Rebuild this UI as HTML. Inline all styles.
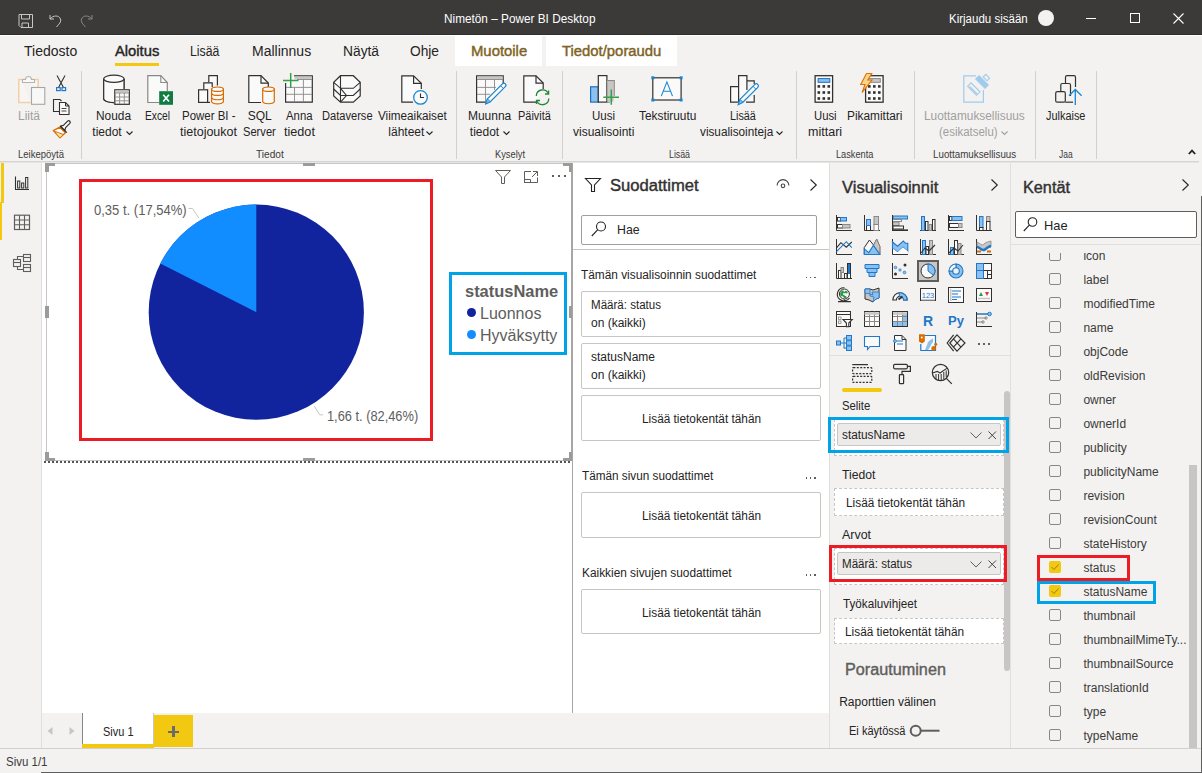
<!DOCTYPE html><html><head><meta charset="utf-8"><style>
html,body{margin:0;padding:0;}
body{width:1202px;height:773px;overflow:hidden;position:relative;background:#f3f2f1;font-family:"Liberation Sans",sans-serif;}
.t{position:absolute;white-space:nowrap;line-height:1;}
svg{overflow:visible}
</style></head><body>
<div style="position:absolute;left:0px;top:0px;width:1202px;height:35px;background:#3b3a39"></div>
<div style="position:absolute;left:0px;top:34px;width:1202px;height:1px;background:#2f2e2d"></div>
<div style="position:absolute;left:0px;top:35px;width:1202px;height:1px;background:#ffffff"></div>
<div class="t" style="left:444.3px;top:13px;font-size:12px;color:#ffffff;transform:scaleX(0.983);transform-origin:0 0;">Nimetön – Power BI Desktop</div>
<div class="t" style="left:949.0px;top:13px;font-size:12px;color:#ffffff;transform:scaleX(0.959);transform-origin:0 0;">Kirjaudu sisään</div>
<div style="position:absolute;left:1038px;top:10px;width:16px;height:16px;background:#f3f2f1;border-radius:50%"></div>
<div style="position:absolute;left:1086px;top:18px;width:10px;height:1px;background:#ffffff"></div>
<div style="position:absolute;left:1130px;top:13px;width:10px;height:10px;border:1px solid #ffffff;box-sizing:border-box"></div>
<svg style="position:absolute;left:1173px;top:13px;" width="11" height="11" viewBox="0 0 11 11"><path d="M0.5 0.5L10.5 10.5M10.5 0.5L0.5 10.5" stroke="#fff" stroke-width="1.1"/></svg>
<svg style="position:absolute;left:18px;top:13px;" width="16" height="16" viewBox="0 0 16 16"><path d="M1 1.5H14.5V14.5H3L1 12.5Z" fill="none" stroke="#c8c6c4" stroke-width="1"/><path d="M3.5 1.5V6H11.5V1.5" fill="none" stroke="#c8c6c4"/><path d="M4 14.5V10H10.5V14.5" fill="none" stroke="#c8c6c4"/></svg>
<svg style="position:absolute;left:48px;top:13px;" width="16" height="16" viewBox="0 0 16 16"><path d="M2 2V6H6" fill="none" stroke="#c8c6c4"/><path d="M2 6C5 2 11 2 12.5 6C13.5 9 11 11 8.5 14" fill="none" stroke="#c8c6c4"/></svg>
<svg style="position:absolute;left:78px;top:13px;" width="16" height="16" viewBox="0 0 16 16"><path d="M14 2V6H10" fill="none" stroke="#8a8886"/><path d="M14 6C11 2 5 2 3.5 6C2.5 9 5 11 7.5 14" fill="none" stroke="#8a8886"/></svg>
<div style="position:absolute;left:455px;top:35px;width:87px;height:31px;background:#ffffff"></div>
<div style="position:absolute;left:546px;top:35px;width:131px;height:31px;background:#ffffff"></div>
<div class="t" style="left:24.0px;top:44px;font-size:14px;color:#252423;">Tiedosto</div>
<div class="t" style="left:115.0px;top:44px;font-size:14px;color:#252423;transform:scaleX(1.054);transform-origin:0 0;-webkit-text-stroke:0.4px #252423;">Aloitus</div>
<div style="position:absolute;left:115px;top:63px;width:44px;height:3px;background:#f2c811"></div>
<div class="t" style="left:190.4px;top:44px;font-size:14px;color:#252423;transform:scaleX(0.879);transform-origin:0 0;">Lisää</div>
<div class="t" style="left:252.0px;top:44px;font-size:14px;color:#252423;">Mallinnus</div>
<div class="t" style="left:343.0px;top:44px;font-size:14px;color:#252423;transform:scaleX(0.985);transform-origin:0 0;">Näytä</div>
<div class="t" style="left:410.0px;top:44px;font-size:14px;color:#252423;transform:scaleX(0.981);transform-origin:0 0;">Ohje</div>
<div class="t" style="left:470.7px;top:44px;font-size:14px;color:#7d6224;transform:scaleX(1.061);transform-origin:0 0;-webkit-text-stroke:0.4px #7d6224;">Muotoile</div>
<div class="t" style="left:561.7px;top:44px;font-size:14px;color:#7d6224;transform:scaleX(1.061);transform-origin:0 0;-webkit-text-stroke:0.4px #7d6224;">Tiedot/poraudu</div>
<div style="position:absolute;left:0px;top:161px;width:1199px;height:1px;background:#d6d4d2"></div>
<div style="position:absolute;left:0px;top:162px;width:1199px;height:1px;background:#e6e5e4;z-index:3"></div>
<div style="position:absolute;left:81px;top:71px;width:1px;height:88px;background:#d2d0ce"></div>
<div style="position:absolute;left:456px;top:71px;width:1px;height:88px;background:#d2d0ce"></div>
<div style="position:absolute;left:562px;top:71px;width:1px;height:88px;background:#d2d0ce"></div>
<div style="position:absolute;left:796px;top:71px;width:1px;height:88px;background:#d2d0ce"></div>
<div style="position:absolute;left:914px;top:71px;width:1px;height:88px;background:#d2d0ce"></div>
<div style="position:absolute;left:1035px;top:71px;width:1px;height:88px;background:#d2d0ce"></div>
<div style="position:absolute;left:1096px;top:71px;width:1px;height:88px;background:#d2d0ce"></div>
<div class="t" style="left:18.0px;top:110px;font-size:12px;color:#a19f9d;">Liitä</div>
<div class="t" style="left:96.0px;top:110px;font-size:12px;color:#252423;transform:scaleX(0.990);transform-origin:0 0;">Nouda</div>
<div class="t" style="left:92.3px;top:126px;font-size:12px;color:#252423;">tiedot</div>
<div class="t" style="left:145.0px;top:110px;font-size:12px;color:#252423;transform:scaleX(0.852);transform-origin:0 0;">Excel</div>
<div class="t" style="left:181.6px;top:110px;font-size:12px;color:#252423;transform:scaleX(0.954);transform-origin:0 0;">Power BI -</div>
<div class="t" style="left:180.0px;top:126px;font-size:12px;color:#252423;transform:scaleX(1.042);transform-origin:0 0;">tietojoukot</div>
<div class="t" style="left:247.7px;top:110px;font-size:12px;color:#252423;">SQL</div>
<div class="t" style="left:242.9px;top:126px;font-size:12px;color:#252423;transform:scaleX(0.928);transform-origin:0 0;">Server</div>
<div class="t" style="left:285.8px;top:110px;font-size:12px;color:#252423;transform:scaleX(0.946);transform-origin:0 0;">Anna</div>
<div class="t" style="left:283.9px;top:126px;font-size:12px;color:#252423;transform:scaleX(1.053);transform-origin:0 0;">tiedot</div>
<div class="t" style="left:322.0px;top:110px;font-size:12px;color:#252423;transform:scaleX(0.925);transform-origin:0 0;">Dataverse</div>
<div class="t" style="left:378.0px;top:110px;font-size:12px;color:#252423;transform:scaleX(0.975);transform-origin:0 0;">Viimeaikaiset</div>
<div class="t" style="left:388.3px;top:126px;font-size:12px;color:#252423;">lähteet</div>
<div class="t" style="left:467.9px;top:110px;font-size:12px;color:#252423;">Muunna</div>
<div class="t" style="left:469.8px;top:126px;font-size:12px;color:#252423;">tiedot</div>
<div class="t" style="left:517.5px;top:110px;font-size:12px;color:#252423;transform:scaleX(0.913);transform-origin:0 0;">Päivitä</div>
<div class="t" style="left:592.0px;top:110px;font-size:12px;color:#252423;transform:scaleX(0.958);transform-origin:0 0;">Uusi</div>
<div class="t" style="left:573.0px;top:126px;font-size:12px;color:#252423;">visualisointi</div>
<div class="t" style="left:638.8px;top:110px;font-size:12px;color:#252423;transform:scaleX(0.988);transform-origin:0 0;">Tekstiruutu</div>
<div class="t" style="left:730.1px;top:110px;font-size:12px;color:#252423;transform:scaleX(0.899);transform-origin:0 0;">Lisää</div>
<div class="t" style="left:699.8px;top:126px;font-size:12px;color:#252423;transform:scaleX(0.980);transform-origin:0 0;">visualisointeja</div>
<div class="t" style="left:813.6px;top:110px;font-size:12px;color:#252423;transform:scaleX(0.941);transform-origin:0 0;">Uusi</div>
<div class="t" style="left:807.5px;top:126px;font-size:12px;color:#252423;transform:scaleX(1.044);transform-origin:0 0;">mittari</div>
<div class="t" style="left:847.3px;top:110px;font-size:12px;color:#252423;transform:scaleX(0.989);transform-origin:0 0;">Pikamittari</div>
<div class="t" style="left:924.0px;top:110px;font-size:12px;color:#a19f9d;transform:scaleX(0.987);transform-origin:0 0;">Luottamuksellisuus</div>
<div class="t" style="left:939.0px;top:126px;font-size:12px;color:#a19f9d;transform:scaleX(0.955);transform-origin:0 0;">(esikatselu)</div>
<div class="t" style="left:1045.9px;top:110px;font-size:12px;color:#252423;transform:scaleX(0.909);transform-origin:0 0;">Julkaise</div>
<div class="t" style="left:18.0px;top:150px;font-size:10px;color:#3b3a39;transform:scaleX(0.951);transform-origin:0 0;">Leikepöytä</div>
<div class="t" style="left:255.6px;top:150px;font-size:10px;color:#3b3a39;transform:scaleX(1.014);transform-origin:0 0;">Tiedot</div>
<div class="t" style="left:495.0px;top:150px;font-size:10px;color:#3b3a39;transform:scaleX(0.931);transform-origin:0 0;">Kyselyt</div>
<div class="t" style="left:669.0px;top:150px;font-size:10px;color:#3b3a39;transform:scaleX(0.878);transform-origin:0 0;">Lisää</div>
<div class="t" style="left:836.3px;top:150px;font-size:10px;color:#3b3a39;transform:scaleX(0.921);transform-origin:0 0;">Laskenta</div>
<div class="t" style="left:933.0px;top:150px;font-size:10px;color:#3b3a39;transform:scaleX(0.978);transform-origin:0 0;">Luottamuksellisuus</div>
<div class="t" style="left:1058.8px;top:150px;font-size:10px;color:#3b3a39;transform:scaleX(0.843);transform-origin:0 0;">Jaa</div>
<svg style="position:absolute;left:125.5px;top:130.5px;" width="7" height="4" viewBox="0 0 7 4"><path d="M0.5 0.5L3.5 3.5L6.5 0.5" fill="none" stroke="#252423" stroke-width="1.1"/></svg>
<svg style="position:absolute;left:426.3px;top:130.5px;" width="7" height="4" viewBox="0 0 7 4"><path d="M0.5 0.5L3.5 3.5L6.5 0.5" fill="none" stroke="#252423" stroke-width="1.1"/></svg>
<svg style="position:absolute;left:503px;top:130.5px;" width="7" height="4" viewBox="0 0 7 4"><path d="M0.5 0.5L3.5 3.5L6.5 0.5" fill="none" stroke="#252423" stroke-width="1.1"/></svg>
<svg style="position:absolute;left:776px;top:130.5px;" width="7" height="4" viewBox="0 0 7 4"><path d="M0.5 0.5L3.5 3.5L6.5 0.5" fill="none" stroke="#252423" stroke-width="1.1"/></svg>
<svg style="position:absolute;left:1000.5px;top:130.5px;" width="7" height="4" viewBox="0 0 7 4"><path d="M0.5 0.5L3.5 3.5L6.5 0.5" fill="none" stroke="#a19f9d" stroke-width="1.1"/></svg>
<svg style="position:absolute;left:1188px;top:148.5px;" width="8" height="6" viewBox="0 0 8 6"><path d="M0.8 5L4 1.6L7.2 5" fill="none" stroke="#252423" stroke-width="1.8"/></svg>
<svg style="position:absolute;left:0px;top:0px;" width="1202" height="162" viewBox="0 0 1202 162"><path d="M21.5 79.5H38.2V88M30.5 102.6H18.8V79.5H21.5" fill="#f8f6f4" stroke="#f3cfa3" stroke-width="1.5"/><path d="M22.5 82.5V79.5H25.5A3 3 0 0 1 31.5 79.5H34.5V82.5Z" fill="#f8f8f8" stroke="#b5b3b1" stroke-width="1.1"/><rect x="31.5" y="87.5" width="13.3" height="16.8" fill="#f8f8f8" stroke="#a8a6a4" stroke-width="1.1"/><path d="M57 75.5L63.5 87.5M65 75.5L58.5 87.5" stroke="#323130" stroke-width="1.1"/><rect x="56.6" y="87.6" width="3.6" height="3" fill="none" stroke="#1f78c9" stroke-width="1.2"/><rect x="62" y="87.6" width="3.6" height="3" fill="none" stroke="#1f78c9" stroke-width="1.2"/><path d="M60 111.5H53.5V99.5H60L61.5 101" fill="none" stroke="#323130" stroke-width="1.1"/><path d="M59.5 102.5H65.5L69 106V114.5H59.5Z" fill="#fafafa" stroke="#323130" stroke-width="1.1"/><path d="M65.5 102.5V106H69" fill="none" stroke="#323130" stroke-width="1"/><path d="M61.5 108.5H66.5M61.5 111H66.5" stroke="#323130" stroke-width="0.9"/><path d="M53.3 130.6L59.8 127.2L65.4 132.8L60 137.8Z" fill="#fdfcfa" stroke="#d86c00" stroke-width="1.3" stroke-linejoin="round"/><path d="M56.5 133.5L63 134.5L60 137.3Z" fill="#f8dc9a"/><path d="M55 131.5L63.5 134.5" stroke="#d86c00" stroke-width="1"/><path d="M60.4 126.2L63.4 125.4L67.6 121.2A1.5 1.5 0 0 1 69.8 123.4L65.6 127.6L64.8 130.6Z" fill="#fafafa" stroke="#323130" stroke-width="1.2" stroke-linejoin="round"/><path d="M60.4 126.2L66.8 132.6" stroke="#323130" stroke-width="1.3"/><path d="M103.7 79V98.8A10.2 3.8 0 0 0 114 102.6M124 79V89" fill="#fafafa" stroke="#323130" stroke-width="1.2"/><path d="M103.7 79V98.8A10.2 3.8 0 0 0 114 102.6V89H124V79Z" fill="#fafafa" stroke="none"/><path d="M103.7 79V98.8A10.2 3.8 0 0 0 114 102.6M124 79V89" fill="none" stroke="#323130" stroke-width="1.2"/><ellipse cx="113.9" cy="78.8" rx="10.2" ry="3.6" fill="#fafafa" stroke="#323130" stroke-width="1.2"/><rect x="114.8" y="89.8" width="14.5" height="14.5" fill="#fafafa" stroke="#323130" stroke-width="1.2"/><rect x="115.4" y="90.4" width="13.3" height="2.2" fill="#c8c6c4"/><path d="M115 93H129M115 97H129M115 100.8H129M119.6 93V104M124.3 93V104" stroke="#8a8886" stroke-width="0.9"/><path d="M159 102.5H147.8V75.7H160.8L167.3 82.5V91" fill="#fafafa" stroke="#8a8886" stroke-width="1.2"/><path d="M160.8 75.7V82.5H167.3" fill="none" stroke="#8a8886" stroke-width="1.1"/><rect x="159.2" y="91.2" width="13.8" height="13.6" fill="#107c41"/><path d="M163.2 94.8L169 101.5M169 94.8L163.2 101.5" stroke="#fff" stroke-width="1.7"/><path d="M208.8 82.5V75.7H217.4V85.5" fill="#fafafa" stroke="#323130" stroke-width="1.2"/><path d="M203.8 89V82.8H212.2V87" fill="#fafafa" stroke="#323130" stroke-width="1.2"/><rect x="198.6" y="89.8" width="9" height="12.6" fill="#fafafa" stroke="#323130" stroke-width="1.2"/><path d="M207.6 102.4H210" stroke="#323130" stroke-width="1.2"/><path d="M211.6 89V101.8A6 2.6 0 0 0 223.4 101.8V89Z" fill="#fafafa" stroke="#d86c00" stroke-width="1.2"/><ellipse cx="217.5" cy="89.2" rx="5.9" ry="2.2" fill="#fafafa" stroke="#d86c00" stroke-width="1.2"/><path d="M211.6 93.5A6 2.4 0 0 0 223.4 93.5M211.6 97.8A6 2.4 0 0 0 223.4 97.8" fill="none" stroke="#d86c00" stroke-width="1.2"/><path d="M261 102.5H248.8V75.7H261L268.3 83V87" fill="#fafafa" stroke="#323130" stroke-width="1.2"/><path d="M261 75.7V83.2H268.3" fill="none" stroke="#323130" stroke-width="1.2"/><path d="M262.7 89V101.8A6 2.6 0 0 0 274.3 101.8V89Z" fill="#fafafa" stroke="#d86c00" stroke-width="1.2"/><ellipse cx="268.5" cy="89.2" rx="5.8" ry="2.2" fill="#fafafa" stroke="#d86c00" stroke-width="1.2"/><path d="M294 75.8H312.3V102.1H285.6V83" fill="#fafafa" stroke="#323130" stroke-width="1.2"/><rect x="294.5" y="76.4" width="17.2" height="2.8" fill="#c8c6c4"/><path d="M297 79.5H312M286 87.4H312M286 94.3H312M294.5 87.4V102M303.4 79.5V102" stroke="#8a8886" stroke-width="0.9"/><path d="M283 80.5H298.5M290.7 73V88" stroke="#33a047" stroke-width="1.5"/><path d="M340.5 75.7H353.3L360.2 82.3V96L353.3 102.1H340.5L333.7 96V82.3Z" fill="#fafafa" stroke="#323130" stroke-width="1.2"/><path d="M340.5 75.7V102.1M333.7 82.3L340.5 88.3H353.3L360.2 82.3M333.7 89L340.5 95.5H353.3L360.2 89M340.5 88.3L346.5 95.5L340.5 102.1" fill="none" stroke="#323130" stroke-width="1.1"/><path d="M413 102.1H401.8V75.9H413.6L421.3 83.3V89" fill="#fafafa" stroke="#323130" stroke-width="1.2"/><path d="M413.6 75.9V83.3H421.3" fill="none" stroke="#323130" stroke-width="1.2"/><circle cx="420.5" cy="97.4" r="6.8" fill="#fafafa" stroke="#1a86d0" stroke-width="1.3"/><path d="M420.5 93.5V97.5H424" fill="none" stroke="#323130" stroke-width="1.1"/><path d="M486 102.1H476.6V75.8H503.2V85" fill="#fafafa" stroke="#323130" stroke-width="1.2"/><rect x="477.2" y="76.4" width="25.4" height="2.9" fill="#c8c6c4"/><path d="M477 79.5H503M477 87.4H496M477 94.3H490M485.5 79.5V102M494.5 79.5V90" stroke="#8a8886" stroke-width="0.9"/><path d="M485.8 103.9L487.4 98.8L502.4 83.8A2 2 0 0 1 505.3 86.7L490.3 101.7Z" fill="#fafafa" stroke="#1a86d0" stroke-width="1.2"/><path d="M485.8 103.9L487.4 98.8L490.3 101.7Z" fill="#8cc0ef" stroke="#1a86d0" stroke-width="1"/><path d="M500.5 85.7L503.4 88.6" stroke="#1a86d0" stroke-width="1"/><path d="M536 102.1H523.8V75.8H536L543.2 83V89" fill="#fafafa" stroke="#323130" stroke-width="1.2"/><path d="M536 75.8V83.2H543.2" fill="none" stroke="#323130" stroke-width="1.2"/><path d="M536.3 96A6.3 6.3 0 0 1 548.3 93.5M548.8 98.5A6.3 6.3 0 0 1 536.8 101" fill="none" stroke="#22863a" stroke-width="1.3"/><path d="M548.6 90.5V94H545M536.5 104V100.5H540" fill="none" stroke="#22863a" stroke-width="1.3"/><rect x="590.6" y="86.8" width="7.7" height="15.3" fill="#8cc0ef" stroke="#1a6fc0" stroke-width="1.2"/><rect x="598.3" y="75.6" width="8.6" height="26.5" fill="#fafafa" stroke="#323130" stroke-width="1.2"/><path d="M606.9 80.7H614.2V96M606.9 102.1H610" fill="#c8c6c4" stroke="#8a8886" stroke-width="1.2"/><rect x="607.5" y="81.3" width="6.1" height="20.3" fill="#c8c6c4"/><path d="M603.3 97.3H619M611.3 89.5V104.7" stroke="#33a047" stroke-width="1.5"/><rect x="652.8" y="77.8" width="28.3" height="22.2" fill="#fafafa" stroke="#323130" stroke-width="1.2"/><rect x="651.3" y="76.3" width="3" height="3" fill="#1a86d0"/><rect x="679.6" y="76.3" width="3" height="3" fill="#1a86d0"/><rect x="651.3" y="98.5" width="3" height="3" fill="#1a86d0"/><rect x="679.6" y="98.5" width="3" height="3" fill="#1a86d0"/><path d="M661.3 96.1L666.9 81.9L672.5 96.1M663.2 91.2H670.6" fill="none" stroke="#1a86d0" stroke-width="1.1"/><path d="M738.6 86.6H730.6V102.2H738" fill="#fafafa" stroke="#323130" stroke-width="1.2"/><path d="M738.6 102V75.7H746.9V90M746.9 80.8H754.2V84M754.2 95V102.2H746" fill="#fafafa" stroke="#323130" stroke-width="1.2"/><path d="M738.3 104.5L740 99.3L754.9 84.4A2 2 0 0 1 757.8 87.3L742.9 102.2Z" fill="#fafafa" stroke="#1a86d0" stroke-width="1.2"/><path d="M738.3 104.5L740 99.3L742.9 102.2Z" fill="#8cc0ef" stroke="#1a86d0" stroke-width="1"/><path d="M753 86.3L755.9 89.2" stroke="#1a86d0" stroke-width="1"/><rect x="815.1" y="75.7" width="17.5" height="26.5" fill="#fafafa" stroke="#323130" stroke-width="1.3"/><rect x="818.1" y="78.6" width="11.7" height="3.7" fill="#8cc0ef" stroke="#1a6fc0" stroke-width="1"/><rect x="817.5" y="85.1" width="2.6" height="2.6" fill="#323130"/><rect x="822.5" y="85.1" width="2.6" height="2.6" fill="#323130"/><rect x="827.5" y="85.1" width="2.6" height="2.6" fill="#323130"/><rect x="817.5" y="91.2" width="2.6" height="2.6" fill="#323130"/><rect x="822.5" y="91.2" width="2.6" height="2.6" fill="#323130"/><rect x="827.5" y="91.2" width="2.6" height="2.6" fill="#323130"/><rect x="817.5" y="97.2" width="2.6" height="2.6" fill="#323130"/><rect x="822.5" y="97.2" width="2.6" height="2.6" fill="#323130"/><rect x="827.5" y="97.2" width="2.6" height="2.6" fill="#323130"/><rect x="865.6" y="75.7" width="17.5" height="26.5" fill="#fafafa" stroke="#323130" stroke-width="1.3"/><rect x="868.6" y="78.6" width="11.7" height="3.7" fill="#c8c6c4" stroke="#8a8886" stroke-width="1"/><rect x="868" y="85.1" width="2.6" height="2.6" fill="#323130"/><rect x="873" y="85.1" width="2.6" height="2.6" fill="#323130"/><rect x="878" y="85.1" width="2.6" height="2.6" fill="#323130"/><rect x="868" y="91.2" width="2.6" height="2.6" fill="#323130"/><rect x="873" y="91.2" width="2.6" height="2.6" fill="#323130"/><rect x="878" y="91.2" width="2.6" height="2.6" fill="#323130"/><rect x="868" y="97.2" width="2.6" height="2.6" fill="#323130"/><rect x="873" y="97.2" width="2.6" height="2.6" fill="#323130"/><rect x="878" y="97.2" width="2.6" height="2.6" fill="#323130"/><path d="M866.5 73.5H871.8L867.8 80H872L862 92.6L865 84.5H860.7Z" fill="#f8d68b" stroke="#e07000" stroke-width="1.1"/><path d="M976 75.8H963.8V102.1H983.4V90" fill="none" stroke="#9fcbec" stroke-width="1.2"/><path d="M967.5 86.3L971 82.8L980 91.8L976.5 95.3Z" fill="none" stroke="#9fcbec" stroke-width="1.1"/><path d="M969.5 86.5L977 94" stroke="#9fcbec" stroke-width="1.4"/><path d="M975.5 79L979 75.5L988.5 85L985 88.5Z" fill="#9fcbec" stroke="#9fcbec" stroke-width="1"/><path d="M983.2 77L985.8 74.4L989.6 78.2L987 80.8Z" fill="none" stroke="#9fcbec" stroke-width="1.1"/><path d="M1065.5 83.5V77.2A1.5 1.5 0 0 1 1067 75.7H1074A1.5 1.5 0 0 1 1075.5 77.2V87" fill="none" stroke="#323130" stroke-width="1.2"/><path d="M1060.8 91.5V85A1.5 1.5 0 0 1 1062.3 83.5H1069A1.5 1.5 0 0 1 1070.5 85V96" fill="none" stroke="#323130" stroke-width="1.2"/><rect x="1055.7" y="91.7" width="9.6" height="10.5" rx="1.5" fill="none" stroke="#323130" stroke-width="1.2"/><path d="M1065.3 102.2H1073" stroke="#323130" stroke-width="1.2"/><path d="M1075.3 104.9V89.8M1069 95.8L1075.3 89.5L1081.6 95.8" fill="none" stroke="#1a86d0" stroke-width="1.3"/></svg>
<svg style="position:absolute;left:0px;top:0px;" width="42" height="300" viewBox="0 0 42 300"><path d="M15.5 176.5V189.5H29" fill="none" stroke="#323130" stroke-width="1.1"/><rect x="17.6" y="181" width="2.2" height="7" fill="none" stroke="#323130" stroke-width="1"/><rect x="21.6" y="183" width="2.2" height="5" fill="none" stroke="#323130" stroke-width="1"/><rect x="25.6" y="177.5" width="2.2" height="10.5" fill="none" stroke="#323130" stroke-width="1"/><rect x="14.5" y="215.2" width="15" height="14.3" fill="none" stroke="#605e5c" stroke-width="1.2"/><path d="M14.5 220H29.5M14.5 224.8H29.5M19.5 215.2V229.5M24.5 215.2V229.5" stroke="#605e5c" stroke-width="1.1"/><g fill="none" stroke="#605e5c" stroke-width="1.1"><rect x="13.5" y="259.5" width="7" height="7"/><path d="M13.5 262.5H20.5"/><rect x="23.5" y="254.5" width="7" height="7"/><path d="M23.5 257.5H30.5"/><rect x="23.5" y="264.5" width="7" height="7"/><path d="M23.5 267.5H30.5"/><path d="M17.5 259.5V256.5H23.5M17.5 266.5V269.5H23.5"/></g></svg>
<div style="position:absolute;left:41px;top:162px;width:1px;height:586px;background:#e1dfdd"></div>
<div style="position:absolute;left:1px;top:163px;width:3px;height:40px;background:#f2c811"></div>
<div style="position:absolute;left:0px;top:202px;width:1.5px;height:38px;background:#f2c811"></div>
<div style="position:absolute;left:42px;top:162px;width:530px;height:551px;background:#ffffff"></div>
<div style="position:absolute;left:46px;top:163px;width:526px;height:298px;border:1px solid #c8c6c4;box-sizing:border-box;border-right:none"></div>
<div style="position:absolute;left:571px;top:163px;width:1.5px;height:298px;background:#a8a6a4"></div>
<div style="position:absolute;left:44px;top:461px;width:526px;height:2px;background:repeating-linear-gradient(90deg,#555 0 2px,transparent 2px 4px)"></div>
<div style="position:absolute;left:45px;top:163px;width:10px;height:3px;background:#9b9b9b"></div>
<div style="position:absolute;left:45px;top:163px;width:4px;height:9px;background:#9b9b9b"></div>
<div style="position:absolute;left:563px;top:163px;width:10px;height:3px;background:#9b9b9b"></div>
<div style="position:absolute;left:569px;top:163px;width:4px;height:9px;background:#9b9b9b"></div>
<div style="position:absolute;left:45px;top:458px;width:10px;height:3px;background:#9b9b9b"></div>
<div style="position:absolute;left:45px;top:452px;width:4px;height:9px;background:#9b9b9b"></div>
<div style="position:absolute;left:563px;top:458px;width:10px;height:3px;background:#9b9b9b"></div>
<div style="position:absolute;left:569px;top:452px;width:4px;height:9px;background:#9b9b9b"></div>
<div style="position:absolute;left:303px;top:163px;width:12px;height:3px;background:#9b9b9b"></div>
<div style="position:absolute;left:303px;top:458px;width:12px;height:3px;background:#9b9b9b"></div>
<div style="position:absolute;left:45px;top:306px;width:4px;height:12px;background:#9b9b9b"></div>
<div style="position:absolute;left:569px;top:306px;width:4px;height:12px;background:#9b9b9b"></div>
<div style="position:absolute;left:79px;top:179px;width:354px;height:262px;border:3px solid #ed1c24;box-sizing:border-box"></div>
<svg style="position:absolute;left:0px;top:0px;pointer-events:none" width="1202" height="773" viewBox="0 0 1202 773"><circle cx="256.3" cy="312.2" r="107.6" fill="#12239e"/><path d="M256.3 312.2L256.3 204.6A107.6 107.6 0 0 0 160.31 263.59Z" fill="#118dff"/><path d="M188.5 208.5H192.5L198.8 218" fill="none" stroke="#c8c6c4" stroke-width="1"/><path d="M314.2 406L319.7 414.8H323" fill="none" stroke="#c8c6c4" stroke-width="1"/></svg>
<div class="t" style="left:93.6px;top:203px;font-size:14px;color:#605e5c;transform:scaleX(0.930);transform-origin:0 0;">0,35 t. (17,54%)</div>
<div class="t" style="left:327.2px;top:409px;font-size:14px;color:#605e5c;transform:scaleX(0.915);transform-origin:0 0;">1,66 t. (82,46%)</div>
<div style="position:absolute;left:449px;top:272px;width:118px;height:83px;border:3px solid #00a2e8;box-sizing:border-box"></div>
<div class="t" style="left:464.6px;top:283.6px;font-size:16px;color:#605e5c;font-weight:bold;transform:scaleX(1.027);transform-origin:0 0;">statusName</div>
<div style="position:absolute;left:467px;top:308px;width:9px;height:9px;background:#12239e;border-radius:50%"></div>
<div style="position:absolute;left:467px;top:329.5px;width:9px;height:9px;background:#118dff;border-radius:50%"></div>
<div class="t" style="left:480.0px;top:306.2px;font-size:16px;color:#605e5c;">Luonnos</div>
<div class="t" style="left:480.0px;top:327.8px;font-size:16px;color:#605e5c;">Hyväksytty</div>
<svg style="position:absolute;left:495px;top:170px;" width="16" height="14" viewBox="0 0 16 14"><path d="M0.5 0.5H15.5L9.5 7V13.5H6.5V7Z" fill="none" stroke="#605e5c" stroke-width="1"/></svg>
<svg style="position:absolute;left:523px;top:170px;" width="16" height="14" viewBox="0 0 16 14"><path d="M1.5 13V1.5H8M14.5 7.5V12.5H1.5M1.5 9.5H7.5V12.5M9 7L14 2M10 1.5H14.5V6" fill="none" stroke="#605e5c" stroke-width="1"/></svg>
<div style="position:absolute;left:552px;top:175px;width:2px;height:2px;background:#605e5c"></div>
<div style="position:absolute;left:558px;top:175px;width:2px;height:2px;background:#605e5c"></div>
<div style="position:absolute;left:564px;top:175px;width:2px;height:2px;background:#605e5c"></div>
<div style="position:absolute;left:572px;top:162px;width:1px;height:551px;background:#a8a6a4"></div>
<div style="position:absolute;left:573px;top:162px;width:256px;height:551px;background:#ffffff"></div>
<div style="position:absolute;left:829px;top:162px;width:1px;height:586px;background:#e1dfdd"></div>
<svg style="position:absolute;left:585px;top:178px;" width="16" height="14" viewBox="0 0 16 14"><path d="M0.5 0.5H15.5L9.5 7V13.5H6.5V7Z" fill="none" stroke="#252423" stroke-width="1.1"/></svg>
<div class="t" style="left:609.9px;top:178px;font-size:16px;color:#323130;transform:scaleX(1.037);transform-origin:0 0;-webkit-text-stroke:0.4px #323130;">Suodattimet</div>
<svg style="position:absolute;left:776px;top:179px;" width="14" height="9" viewBox="0 0 14 9"><path d="M1.1 6.5A5.9 5.9 0 0 1 12.9 6.5" fill="none" stroke="#484644" stroke-width="1.1"/><circle cx="7" cy="6.8" r="1.8" fill="none" stroke="#484644" stroke-width="1.1"/></svg>
<svg style="position:absolute;left:810px;top:179px;" width="7" height="12" viewBox="0 0 7 12"><path d="M0.5 0.5L6.3 6L0.5 11.5" fill="none" stroke="#252423" stroke-width="1.1"/></svg>
<div style="position:absolute;left:581px;top:215px;width:236px;height:30px;border:1px solid #a19f9d;border-radius:2px;box-sizing:border-box"></div>
<svg style="position:absolute;left:591px;top:221px;" width="16" height="16" viewBox="0 0 16 16"><circle cx="10" cy="5.5" r="4.5" fill="none" stroke="#252423" stroke-width="1.1"/><path d="M6.8 8.7L0.8 15" stroke="#252423" stroke-width="1.1"/></svg>
<div class="t" style="left:617.4px;top:222.8px;font-size:13px;color:#252423;transform:scaleX(0.947);transform-origin:0 0;">Hae</div>
<div style="position:absolute;left:573px;top:249px;width:256px;height:1px;background:#c8c6c4"></div>
<div class="t" style="left:581.0px;top:269px;font-size:12px;color:#252423;transform:scaleX(0.988);transform-origin:0 0;">Tämän visualisoinnin suodattimet</div>
<div style="position:absolute;left:805.6px;top:276.5px;width:1.6px;height:1.6px;background:#605e5c"></div>
<div style="position:absolute;left:809.9px;top:276.5px;width:1.6px;height:1.6px;background:#605e5c"></div>
<div style="position:absolute;left:814.2px;top:276.5px;width:1.6px;height:1.6px;background:#605e5c"></div>
<div style="position:absolute;left:581px;top:291px;width:240px;height:46px;border:1px solid #c8c6c4;border-radius:2px;box-sizing:border-box"></div>
<div style="position:absolute;left:581px;top:343px;width:240px;height:46px;border:1px solid #c8c6c4;border-radius:2px;box-sizing:border-box"></div>
<div style="position:absolute;left:581px;top:395px;width:240px;height:46px;border:1px solid #c8c6c4;border-radius:2px;box-sizing:border-box"></div>
<div class="t" style="left:591.0px;top:298.8px;font-size:12px;color:#252423;transform:scaleX(0.963);transform-origin:0 0;">Määrä: status</div>
<div class="t" style="left:591.0px;top:316.7px;font-size:12px;color:#252423;">on (kaikki)</div>
<div class="t" style="left:591.0px;top:350.7px;font-size:12px;color:#252423;">statusName</div>
<div class="t" style="left:591.0px;top:368.7px;font-size:12px;color:#252423;">on (kaikki)</div>
<div class="t" style="left:641.5px;top:412.8px;font-size:12px;color:#252423;transform:scaleX(0.986);transform-origin:0 0;">Lisää tietokentät tähän</div>
<div class="t" style="left:581.6px;top:469.7px;font-size:12px;color:#252423;transform:scaleX(0.979);transform-origin:0 0;">Tämän sivun suodattimet</div>
<div style="position:absolute;left:805.6px;top:477px;width:1.6px;height:1.6px;background:#605e5c"></div>
<div style="position:absolute;left:809.9px;top:477px;width:1.6px;height:1.6px;background:#605e5c"></div>
<div style="position:absolute;left:814.2px;top:477px;width:1.6px;height:1.6px;background:#605e5c"></div>
<div style="position:absolute;left:581px;top:492px;width:240px;height:46px;border:1px solid #c8c6c4;border-radius:2px;box-sizing:border-box"></div>
<div class="t" style="left:641.5px;top:509.6px;font-size:12px;color:#252423;transform:scaleX(0.986);transform-origin:0 0;">Lisää tietokentät tähän</div>
<div class="t" style="left:581.6px;top:566.6px;font-size:12px;color:#252423;transform:scaleX(0.988);transform-origin:0 0;">Kaikkien sivujen suodattimet</div>
<div style="position:absolute;left:805.6px;top:574px;width:1.6px;height:1.6px;background:#605e5c"></div>
<div style="position:absolute;left:809.9px;top:574px;width:1.6px;height:1.6px;background:#605e5c"></div>
<div style="position:absolute;left:814.2px;top:574px;width:1.6px;height:1.6px;background:#605e5c"></div>
<div style="position:absolute;left:581px;top:589px;width:240px;height:45px;border:1px solid #c8c6c4;border-radius:2px;box-sizing:border-box"></div>
<div class="t" style="left:641.5px;top:606.6px;font-size:12px;color:#252423;transform:scaleX(0.986);transform-origin:0 0;">Lisää tietokentät tähän</div>
<div class="t" style="left:842.0px;top:180px;font-size:16px;color:#323130;transform:scaleX(1.034);transform-origin:0 0;-webkit-text-stroke:0.4px #323130;">Visualisoinnit</div>
<svg style="position:absolute;left:991px;top:179px;" width="7" height="12" viewBox="0 0 7 12"><path d="M0.5 0.5L6.3 6L0.5 11.5" fill="none" stroke="#252423" stroke-width="1.1"/></svg>
<div style="position:absolute;left:830px;top:355px;width:180px;height:1px;background:#e1dfdd"></div>
<div style="position:absolute;left:917px;top:260px;width:22px;height:22px;background:#c8c6c4;border:2px solid #605e5c;box-sizing:border-box"></div>
<svg style="position:absolute;left:836px;top:215px;" width="16" height="16" viewBox="0 0 16 16"><path d="M0.5 0V15.5H16" fill="none" stroke="#323130" stroke-width="1"/><rect x="1.5" y="2.5" width="3" height="3.5" fill="#fafafa" stroke="#323130" stroke-width="1"/><rect x="4.5" y="2.5" width="6" height="3.5" fill="#8cc0ef" stroke="#1f78c9" stroke-width="1"/><rect x="1.5" y="9.5" width="5" height="3.5" fill="#fafafa" stroke="#323130" stroke-width="1"/><rect x="6.5" y="9.5" width="7.5" height="3.5" fill="#c8c6c4" stroke="#8a8886" stroke-width="1"/></svg>
<svg style="position:absolute;left:864px;top:215px;" width="16" height="16" viewBox="0 0 16 16"><path d="M0.5 0V15.5H16" fill="none" stroke="#323130" stroke-width="1"/><rect x="2.5" y="10.5" width="4" height="5" fill="#fafafa" stroke="#323130" stroke-width="1"/><rect x="2.5" y="4.5" width="4" height="6" fill="#8cc0ef" stroke="#1f78c9" stroke-width="1"/><rect x="10" y="1.5" width="4.5" height="8" fill="#c8c6c4" stroke="#8a8886" stroke-width="1"/><rect x="10" y="9.5" width="4.5" height="6" fill="#fafafa" stroke="#8a8886" stroke-width="1"/></svg>
<svg style="position:absolute;left:892px;top:215px;" width="16" height="16" viewBox="0 0 16 16"><rect x="1" y="1" width="14.5" height="3" fill="#8cc0ef" stroke="#1f78c9" stroke-width="1"/><rect x="1" y="4.5" width="8.5" height="2" fill="#fafafa" stroke="#8a8886" stroke-width="1"/><rect x="1" y="7" width="6" height="3.5" fill="#c8c6c4" stroke="#8a8886" stroke-width="1"/><rect x="1" y="11" width="10.5" height="3" fill="#fafafa" stroke="#323130" stroke-width="1"/><path d="M0.5 15.2H16" stroke="#323130" stroke-width="1.6"/><path d="M0.5 0V16" stroke="#323130"/></svg>
<svg style="position:absolute;left:920px;top:215px;" width="16" height="16" viewBox="0 0 16 16"><path d="M0 15.5H16" stroke="#323130"/><rect x="1.5" y="1.5" width="3" height="14" fill="#8cc0ef" stroke="#1f78c9" stroke-width="1"/><rect x="5.5" y="6.5" width="2.5" height="9" fill="#fafafa" stroke="#323130" stroke-width="1"/><rect x="9" y="9.5" width="2.5" height="6" fill="#c8c6c4" stroke="#8a8886" stroke-width="1"/><rect x="12.5" y="4.5" width="2.5" height="11" fill="#fafafa" stroke="#323130" stroke-width="1"/></svg>
<svg style="position:absolute;left:948px;top:215px;" width="16" height="16" viewBox="0 0 16 16"><path d="M0.5 0V15.5H16" fill="none" stroke="#323130" stroke-width="1"/><rect x="1.5" y="1.5" width="2.5" height="4" fill="#fafafa" stroke="#323130" stroke-width="1"/><rect x="4" y="1.5" width="10" height="4" fill="#8cc0ef" stroke="#1f78c9" stroke-width="1"/><rect x="1.5" y="8.5" width="9" height="4" fill="#fafafa" stroke="#323130" stroke-width="1"/><rect x="10.5" y="8.5" width="3.5" height="4" fill="#c8c6c4" stroke="#8a8886" stroke-width="1"/></svg>
<svg style="position:absolute;left:976px;top:215px;" width="16" height="16" viewBox="0 0 16 16"><path d="M0.5 0V15.5H16" fill="none" stroke="#323130" stroke-width="1"/><rect x="3.5" y="1.5" width="3.5" height="11" fill="#8cc0ef" stroke="#1f78c9" stroke-width="1"/><rect x="3.5" y="12.5" width="3.5" height="3" fill="#fafafa" stroke="#323130" stroke-width="1"/><rect x="10.5" y="1.5" width="3.5" height="5" fill="#c8c6c4" stroke="#8a8886" stroke-width="1"/><rect x="10.5" y="6.5" width="3.5" height="9" fill="#fafafa" stroke="#323130" stroke-width="1"/></svg>
<svg style="position:absolute;left:836px;top:239px;" width="16" height="16" viewBox="0 0 16 16"><path d="M0.5 0V15.5H16" fill="none" stroke="#323130" stroke-width="1"/><path d="M0.5 8.9L4.9 3.7L10.3 8.2L15.8 3" fill="none" stroke="#323130" stroke-width="1.1"/><path d="M0.5 12.6L10.3 2.7L15.8 8.7" fill="none" stroke="#1f78c9" stroke-width="1.1"/></svg>
<svg style="position:absolute;left:864px;top:239px;" width="16" height="16" viewBox="0 0 16 16"><path d="M0.3 8.5L5.4 1L9.6 6.1L12.7 0.2L15.8 7.5V15.5H0.3Z" fill="#fafafa" stroke="#323130" stroke-width="1"/><path d="M9.6 6.1L12.7 0.2L15.8 7.5V15.5Z" fill="#c8c6c4" stroke="#8a8886" stroke-width="1"/><path d="M0.3 9.9L4.8 13.6L9.3 6.5L15.8 15.5H0.3Z" fill="#8cc0ef" stroke="#1f78c9" stroke-width="1.1"/></svg>
<svg style="position:absolute;left:892px;top:239px;" width="16" height="16" viewBox="0 0 16 16"><path d="M0.5 0V15.5H16" fill="none" stroke="#323130"/><path d="M0.5 3L5.5 7.2L11.3 2L13.3 4.2H15.8V12.3L10.9 8.2L5.5 13.3L0.5 9.2Z" fill="#8cc0ef" stroke="#1f78c9" stroke-width="1.1"/><path d="M1 9.5L5.5 13.3L10.9 8.2L15.8 12.3V15H1Z" fill="#fafafa"/></svg>
<svg style="position:absolute;left:920px;top:239px;" width="16" height="16" viewBox="0 0 16 16"><path d="M0.5 0V15.5H16" fill="none" stroke="#323130" stroke-width="1"/><rect x="2.5" y="1.5" width="3" height="14" fill="#8cc0ef" stroke="#1f78c9" stroke-width="1"/><rect x="9.5" y="1.5" width="3" height="14" fill="#c8c6c4" stroke="#8a8886" stroke-width="1"/><rect x="6" y="7.5" width="2.5" height="8" fill="#fafafa" stroke="#323130" stroke-width="1"/><path d="M1 14L5 9L9 12L15 6" fill="none" stroke="#323130" stroke-width="1.1"/></svg>
<svg style="position:absolute;left:948px;top:239px;" width="16" height="16" viewBox="0 0 16 16"><path d="M0.5 0V15.5H16" fill="none" stroke="#323130" stroke-width="1"/><rect x="2.5" y="8.5" width="3" height="7" fill="#8cc0ef" stroke="#1f78c9" stroke-width="1"/><rect x="6.5" y="1.5" width="3" height="14" fill="#fafafa" stroke="#323130" stroke-width="1"/><rect x="10" y="4.5" width="3" height="11" fill="#c8c6c4" stroke="#8a8886" stroke-width="1"/><path d="M1 14L6 9L10 12L15 6" fill="none" stroke="#323130" stroke-width="1.1"/></svg>
<svg style="position:absolute;left:976px;top:239px;" width="16" height="16" viewBox="0 0 16 16"><path d="M0.5 0V15.5H16" fill="none" stroke="#323130" stroke-width="1"/><path d="M1 3C5 5 6 7 8 5C10 3 12 3 15 2V8C12 9 10 7 8 10C6 12 4 7 1 8Z" fill="#c8c6c4" stroke="#8a8886" stroke-width="0.8"/><path d="M1 8C4 8 5 12 8 11C11 10 12 7 15 7" fill="none" stroke="#1f78c9" stroke-width="2.5"/><rect x="1" y="11.5" width="4" height="2" fill="#d86c00" stroke="#d86c00" stroke-width="0"/><rect x="11" y="11.5" width="4" height="2" fill="#d86c00" stroke="#d86c00" stroke-width="0"/></svg>
<svg style="position:absolute;left:836px;top:263px;" width="16" height="16" viewBox="0 0 16 16"><path d="M0.5 0V15.5H16" fill="none" stroke="#323130" stroke-width="1"/><rect x="2.5" y="7.5" width="2.5" height="8" fill="#fafafa" stroke="#323130" stroke-width="1"/><rect x="5" y="4.5" width="2.5" height="5" fill="#c8c6c4" stroke="#8a8886" stroke-width="1"/><rect x="8.5" y="10.5" width="2.5" height="5" fill="#fafafa" stroke="#323130" stroke-width="1"/><rect x="11.5" y="0.5" width="3" height="15" fill="#fafafa" stroke="#323130" stroke-width="1"/><rect x="12" y="1" width="2" height="10" fill="#1f78c9" stroke="#1f78c9" stroke-width="0"/></svg>
<svg style="position:absolute;left:864px;top:263px;" width="16" height="16" viewBox="0 0 16 16"><path d="M1 1.5H15V5.5H13V9.5H11V13.5H5V9.5H3V5.5H1Z" fill="#8cc0ef" stroke="#1f78c9" stroke-width="1"/><path d="M1 5.5H15M3 9.5H13" stroke="#1f78c9"/></svg>
<svg style="position:absolute;left:892px;top:263px;" width="16" height="16" viewBox="0 0 16 16"><path d="M0.5 0V15.5H16" fill="none" stroke="#323130" stroke-width="1"/><circle cx="3.5" cy="4.5" r="1.3" fill="#8cc0ef" stroke="#1f78c9" stroke-width="0.7"/><circle cx="13" cy="2" r="1.5" fill="#323130"/><circle cx="3.5" cy="11" r="1.5" fill="#323130"/><rect x="7" y="6" width="2" height="2" fill="#8cc0ef" stroke="#1f78c9" stroke-width="0.6"/><circle cx="12.5" cy="9.5" r="1.4" fill="#8cc0ef" stroke="#1f78c9" stroke-width="0.7"/></svg>
<svg style="position:absolute;left:920px;top:263px;" width="16" height="16" viewBox="0 0 16 16"><circle cx="8" cy="8" r="7" fill="#fafafa" stroke="#323130" stroke-width="1"/><path d="M8 1A7 7 0 0 1 13.5 12.3L8 8Z" fill="#8cc0ef" stroke="#1f78c9" stroke-width="1"/></svg>
<svg style="position:absolute;left:948px;top:263px;" width="16" height="16" viewBox="0 0 16 16"><path d="M8 1A7 7 0 1 1 1 8H4.7A3.3 3.3 0 1 0 8 4.7Z" fill="#8cc0ef" stroke="#1f78c9" stroke-width="1.1"/><path d="M8 1A7 7 0 0 0 1 8H4.7A3.3 3.3 0 0 1 8 4.7Z" fill="#fafafa" stroke="#1f78c9" stroke-width="1.1"/></svg>
<svg style="position:absolute;left:976px;top:263px;" width="16" height="16" viewBox="0 0 16 16"><rect x="0.5" y="0.5" width="15" height="15" fill="#fafafa" stroke="#323130" stroke-width="1"/><rect x="0.5" y="0.5" width="7" height="7" fill="#8cc0ef" stroke="#1f78c9" stroke-width="1"/><rect x="0.5" y="7.5" width="7" height="8" fill="#8cc0ef" stroke="#1f78c9" stroke-width="1"/><path d="M7.5 7.5H15.5M11.5 7.5V15.5M11.5 11.5H15.5" stroke="#323130"/></svg>
<svg style="position:absolute;left:836px;top:287px;" width="16" height="16" viewBox="0 0 16 16"><circle cx="8.4" cy="7" r="5" fill="#fafafa" stroke="#323130" stroke-width="1"/><path d="M5 4.5L7 3L8 5L10 3.5L12 5L11 6.5L9 6.5L8 8L10 9L11 10.5L8.5 11.5L7 9.5L4.5 9L4 6.5Z" fill="#2e9b48"/><path d="M7 7H9.5V9" stroke="#fafafa" stroke-width="1.6" fill="none"/><path d="M8.5 0.8A6.5 6.5 0 0 0 4 12.5A6.5 6.5 0 0 0 13.5 11" fill="none" stroke="#323130" stroke-width="1.1"/><path d="M8.4 12.5V14.5M2 14.7H14.8" stroke="#323130" stroke-width="1.2"/></svg>
<svg style="position:absolute;left:864px;top:287px;" width="16" height="16" viewBox="0 0 16 16"><path d="M1 2H6L9 3L15 1V11L12 12L9 15L5 13L1 12Z" fill="#c8c6c4" stroke="#323130" stroke-width="1"/><path d="M1 2H6V7L9 8L8 5L15 5V11L12 12L9 15L10 10L6 9V7L1 6Z" fill="#8cc0ef" stroke="#1f78c9" stroke-width="0.8"/></svg>
<svg style="position:absolute;left:892px;top:287px;" width="16" height="16" viewBox="0 0 16 16"><path d="M0.8 13A7.2 7.2 0 0 1 15.2 13H11.6A3.6 3.6 0 0 0 4.4 13Z" fill="#fafafa" stroke="#323130" stroke-width="1.1"/><path d="M7 5.9A7.2 7.2 0 0 1 15.2 13H11.6A3.6 3.6 0 0 0 7.5 9.5Z" fill="#8cc0ef" stroke="#1f78c9" stroke-width="1.1"/><path d="M6.5 12.5L10.5 9.5" stroke="#323130" stroke-width="1.8"/></svg>
<svg style="position:absolute;left:920px;top:287px;" width="16" height="16" viewBox="0 0 16 16"><rect x="0.5" y="1.5" width="15" height="12" fill="#fafafa" stroke="#323130" stroke-width="1"/><rect x="1" y="12" width="14" height="1.5" fill="#c8c6c4" stroke="#c8c6c4" stroke-width="0"/><text x="8" y="10.5" font-family="Liberation Sans" font-size="7.5" text-anchor="middle" fill="#1f78c9">123</text></svg>
<svg style="position:absolute;left:948px;top:287px;" width="16" height="16" viewBox="0 0 16 16"><rect x="0.5" y="0.5" width="15" height="15" fill="#fafafa" stroke="#323130" stroke-width="1"/><rect x="2" y="2" width="1.5" height="12" fill="#c8c6c4" stroke="#c8c6c4" stroke-width="0"/><path d="M4 4H13M4 7H10M4 10H13M4 12.5H9" stroke="#1f78c9" stroke-width="1.2"/></svg>
<svg style="position:absolute;left:976px;top:287px;" width="16" height="16" viewBox="0 0 16 16"><rect x="0.5" y="1.5" width="15" height="13" fill="#fafafa" stroke="#323130" stroke-width="1"/><path d="M3 9L5 5L7 9Z" fill="#2e9b48"/><path d="M9 5H13L11 9Z" fill="#e0303a"/><path d="M2 11.5H14" stroke="#c8c6c4" stroke-width="1.5"/></svg>
<svg style="position:absolute;left:836px;top:311px;" width="16" height="16" viewBox="0 0 16 16"><rect x="0.5" y="0.5" width="14" height="15" fill="#fafafa" stroke="#323130" stroke-width="1"/><path d="M0.5 3.5H14.5" stroke="#323130"/><rect x="2.5" y="6" width="2.5" height="2.5" fill="#fafafa" stroke="#8a8886" stroke-width="0.8"/><rect x="2.5" y="10" width="2.5" height="2.5" fill="#fafafa" stroke="#8a8886" stroke-width="0.8"/><path d="M7 8.5H16.2L12.8 12V15.8H10.4V12Z" fill="#fafafa" stroke="#323130" stroke-width="1.1"/></svg>
<svg style="position:absolute;left:864px;top:311px;" width="16" height="16" viewBox="0 0 16 16"><rect x="0.5" y="0.5" width="15" height="15" fill="#fafafa" stroke="#323130" stroke-width="1"/><path d="M0.5 5.5H15.5M0.5 10.5H15.5M5.5 0.5V15.5M10.5 0.5V15.5" stroke="#8a8886"/><path d="M0.5 2.5H15.5" stroke="#c8c6c4" stroke-width="2.5"/></svg>
<svg style="position:absolute;left:892px;top:311px;" width="16" height="16" viewBox="0 0 16 16"><rect x="0.5" y="0.5" width="15" height="15" fill="#fafafa" stroke="#323130" stroke-width="1"/><rect x="10.5" y="3" width="5" height="12.5" fill="#8cc0ef" stroke="#1f78c9" stroke-width="0"/><rect x="0.5" y="10.5" width="15" height="5" fill="#8cc0ef" stroke="#1f78c9" stroke-width="0"/><path d="M0.5 5.5H15.5M0.5 10.5H15.5M5.5 0.5V15.5M10.5 0.5V15.5" stroke="#8a8886"/><path d="M0.5 2.5H15.5" stroke="#c8c6c4" stroke-width="2.5"/><rect x="0.5" y="0.5" width="15" height="15" fill="none" stroke="#323130"/></svg>
<svg style="position:absolute;left:920px;top:311px;" width="16" height="16" viewBox="0 0 16 16"><text x="8" y="15" font-family="Liberation Sans" font-weight="bold" font-size="14" text-anchor="middle" fill="#1f78c9">R</text></svg>
<svg style="position:absolute;left:948px;top:311px;" width="16" height="16" viewBox="0 0 16 16"><text x="8" y="13.5" font-family="Liberation Sans" font-weight="bold" font-size="13" text-anchor="middle" fill="#1f78c9">Py</text></svg>
<svg style="position:absolute;left:976px;top:311px;" width="16" height="16" viewBox="0 0 16 16"><path d="M0.5 1V15.5H16" fill="none" stroke="#323130"/><path d="M1 3H13M1 7H10M1 11H7" stroke="#8a8886"/><path d="M1 3H13" stroke="#1f78c9" stroke-width="1.2"/><circle cx="13.5" cy="3" r="1.8" fill="#8cc0ef" stroke="#1f78c9" stroke-width="1"/><circle cx="10" cy="7" r="1.2" fill="none" stroke="#8a8886"/><circle cx="7" cy="11" r="1.2" fill="none" stroke="#8a8886"/></svg>
<svg style="position:absolute;left:836px;top:335px;" width="16" height="16" viewBox="0 0 16 16"><rect x="0.5" y="6" width="4" height="4" fill="#8cc0ef" stroke="#1f78c9" stroke-width="1"/><rect x="10.5" y="0.5" width="5" height="4.5" fill="#8cc0ef" stroke="#1f78c9" stroke-width="1"/><rect x="10.5" y="5.7" width="5" height="4.5" fill="#8cc0ef" stroke="#1f78c9" stroke-width="1"/><rect x="10.5" y="11" width="5" height="4.5" fill="#8cc0ef" stroke="#1f78c9" stroke-width="1"/><path d="M4.5 8H8M8 3V13.5M8 3H10.5M8 8H10.5M8 13H10.5" fill="none" stroke="#1f78c9"/></svg>
<svg style="position:absolute;left:864px;top:335px;" width="16" height="16" viewBox="0 0 16 16"><path d="M0.5 1.5H15.5V11.5H6L3.5 14.5V11.5H0.5Z" fill="#fafafa" stroke="#1f78c9" stroke-width="1.1"/></svg>
<svg style="position:absolute;left:892px;top:335px;" width="16" height="16" viewBox="0 0 16 16"><path d="M2.5 0.5H10L14 4.5V15.5H2.5Z" fill="#fafafa" stroke="#323130" stroke-width="1"/><path d="M10 0.5V4.5H14" fill="none" stroke="#323130"/><circle cx="3" cy="6" r="1.5" fill="#8cc0ef" stroke="#1f78c9" stroke-width="0.8"/><path d="M5 6H11M5 9H11" stroke="#1f78c9" stroke-width="1"/></svg>
<svg style="position:absolute;left:920px;top:335px;" width="16" height="16" viewBox="0 0 16 16"><path d="M4.5 0.5H15.5V15.5H0.8V9" fill="#fafafa" stroke="#1f78c9" stroke-width="1.2"/><path d="M5 15L7 10L8 7L11 4.5L13 3.5V7L11.5 9L10 12L8 15Z" fill="#8cc0ef"/><path d="M-1 -0.8H4.8V6.5L2 8.6L-1 6.5Z" fill="#d86c00"/><circle cx="1.8" cy="2.6" r="1" fill="#fff"/><circle cx="13.6" cy="13.4" r="2.3" fill="#d86c00"/><circle cx="15.7" cy="9.2" r="1.5" fill="#d86c00"/></svg>
<svg style="position:absolute;left:948px;top:335px;" width="16" height="16" viewBox="0 0 16 16"><path d="M5.6 -0.2L-0.8 8L5.6 16.2" fill="none" stroke="#323130" stroke-width="1.2"/><path d="M9 -0.2L17 8L9 16.2L1.8 8Z" fill="none" stroke="#323130" stroke-width="1.2"/><path d="M5.4 3.9L13 12.1M13 3.9L5.4 12.1" stroke="#323130" stroke-width="1.1"/></svg>
<svg style="position:absolute;left:976px;top:335px;" width="16" height="16" viewBox="0 0 16 16"><circle cx="3" cy="9" r="1" fill="#323130"/><circle cx="8" cy="9" r="1" fill="#323130"/><circle cx="13" cy="9" r="1" fill="#323130"/></svg>
<svg style="position:absolute;left:0px;top:0px;" width="1202" height="400" viewBox="0 0 1202 400"><path d="M852.3 364.6H868" stroke="#323130" stroke-width="1.2"/><rect x="852.6" y="367.6" width="19.2" height="6" rx="0.8" fill="none" stroke="#323130" stroke-width="1.2" stroke-dasharray="2 1.4"/><rect x="852.6" y="376.4" width="19.2" height="6" rx="0.8" fill="none" stroke="#323130" stroke-width="1.2" stroke-dasharray="2 1.4"/><rect x="893.6" y="364.4" width="13.8" height="4.4" rx="1.2" fill="none" stroke="#323130" stroke-width="1.2"/><path d="M907.4 366.4H910.4V371.4H902V374.5" fill="none" stroke="#323130" stroke-width="1.2"/><rect x="899.4" y="374.6" width="4.2" height="9" rx="0.6" fill="none" stroke="#323130" stroke-width="1.2"/><circle cx="940.5" cy="372.5" r="8.2" fill="none" stroke="#323130" stroke-width="1.2"/><path d="M946.3 378.3L951.8 383.8" stroke="#323130" stroke-width="1.2"/><path d="M932.5 373L937.3 371.4L940 373L946.8 368.4" fill="none" stroke="#323130" stroke-width="1.1"/><path d="M936 374V379.5M938.6 374V380.5M941.2 374V380.5M943.8 372V379.5M946.2 370.5V377" stroke="#323130" stroke-width="1"/></svg>
<div style="position:absolute;left:842px;top:388px;width:40px;height:3.5px;background:#f2c811;border-radius:2px"></div>
<div class="t" style="left:842.0px;top:399.7px;font-size:12px;color:#252423;transform:scaleX(0.943);transform-origin:0 0;">Selite</div>
<div style="position:absolute;left:834px;top:419px;width:170px;height:37px;background:#ffffff;border:1px dashed #c8c6c4;box-sizing:border-box"></div>
<div style="position:absolute;left:837px;top:423px;width:164px;height:23px;background:#edebe9;border:1px solid #c8c6c4;border-radius:2px;box-sizing:border-box"></div>
<div class="t" style="left:842.0px;top:428.8px;font-size:12px;color:#252423;transform:scaleX(0.983);transform-origin:0 0;">statusName</div>
<svg style="position:absolute;left:970px;top:431.5px;" width="12" height="7" viewBox="0 0 12 7"><path d="M0.5 0.5L6 6L11.5 0.5" fill="none" stroke="#605e5c" stroke-width="1"/></svg>
<svg style="position:absolute;left:988px;top:431px;" width="9" height="9" viewBox="0 0 9 9"><path d="M0.5 0.5L8 8M8 0.5L0.5 8" stroke="#484644" stroke-width="1"/></svg>
<div style="position:absolute;left:1004px;top:391px;width:6px;height:280px;background:#c8c6c4;border-radius:3px;z-index:1"></div>
<div style="position:absolute;left:828px;top:417px;width:181px;height:36px;border:3px solid #00a2e8;box-sizing:border-box;z-index:2"></div>
<div class="t" style="left:842.0px;top:468.7px;font-size:12px;color:#252423;transform:scaleX(1.015);transform-origin:0 0;">Tiedot</div>
<div style="position:absolute;left:834px;top:488px;width:170px;height:28px;background:#ffffff;border:1px dashed #c8c6c4;box-sizing:border-box"></div>
<div class="t" style="left:845.5px;top:496.7px;font-size:12px;color:#252423;transform:scaleX(0.986);transform-origin:0 0;">Lisää tietokentät tähän</div>
<div class="t" style="left:842.0px;top:528.6px;font-size:12px;color:#252423;transform:scaleX(1.036);transform-origin:0 0;">Arvot</div>
<div style="position:absolute;left:834px;top:548px;width:170px;height:37px;background:#ffffff;border:1px dashed #c8c6c4;box-sizing:border-box"></div>
<div style="position:absolute;left:837px;top:552px;width:164px;height:23px;background:#edebe9;border:1px solid #c8c6c4;border-radius:2px;box-sizing:border-box"></div>
<div class="t" style="left:842.0px;top:557.8px;font-size:12px;color:#252423;transform:scaleX(0.963);transform-origin:0 0;">Määrä: status</div>
<svg style="position:absolute;left:970px;top:560.5px;" width="12" height="7" viewBox="0 0 12 7"><path d="M0.5 0.5L6 6L11.5 0.5" fill="none" stroke="#605e5c" stroke-width="1"/></svg>
<svg style="position:absolute;left:988px;top:560px;" width="9" height="9" viewBox="0 0 9 9"><path d="M0.5 0.5L8 8M8 0.5L0.5 8" stroke="#484644" stroke-width="1"/></svg>
<div style="position:absolute;left:829px;top:545px;width:178px;height:37px;border:3px solid #ed1c24;box-sizing:border-box;z-index:2"></div>
<div class="t" style="left:842.7px;top:597.6px;font-size:12px;color:#252423;transform:scaleX(0.974);transform-origin:0 0;">Työkaluvihjeet</div>
<div style="position:absolute;left:834px;top:617.5px;width:170px;height:26.5px;background:#ffffff;border:1px dashed #c8c6c4;box-sizing:border-box"></div>
<div class="t" style="left:845.4px;top:625.7px;font-size:12px;color:#252423;transform:scaleX(0.986);transform-origin:0 0;">Lisää tietokentät tähän</div>
<div class="t" style="left:845.0px;top:661.6px;font-size:16px;color:#605e5c;transform:scaleX(1.013);transform-origin:0 0;-webkit-text-stroke:0.4px #605e5c;">Porautuminen</div>
<div class="t" style="left:839.2px;top:695.8px;font-size:12px;color:#252423;">Raporttien välinen</div>
<div class="t" style="left:848.7px;top:724.6px;font-size:12px;color:#252423;transform:scaleX(0.921);transform-origin:0 0;">Ei käytössä</div>
<svg style="position:absolute;left:909px;top:724px;" width="32" height="14" viewBox="0 0 32 14"><circle cx="6.7" cy="6.7" r="5" fill="none" stroke="#605e5c" stroke-width="2"/><path d="M11.7 6.7H30.5" stroke="#605e5c" stroke-width="2"/></svg>
<div style="position:absolute;left:1010px;top:162px;width:1px;height:586px;background:#e1dfdd"></div>
<div class="t" style="left:1023.2px;top:180px;font-size:16px;color:#323130;transform:scaleX(1.015);transform-origin:0 0;-webkit-text-stroke:0.4px #323130;">Kentät</div>
<svg style="position:absolute;left:1182px;top:179px;" width="7" height="12" viewBox="0 0 7 12"><path d="M0.5 0.5L6.3 6L0.5 11.5" fill="none" stroke="#252423" stroke-width="1.1"/></svg>
<div style="position:absolute;left:1015.4px;top:211.2px;width:181.2px;height:26.5px;background:#fff;border:1px solid #605e5c;border-radius:2px;box-sizing:border-box"></div>
<svg style="position:absolute;left:1023px;top:217px;" width="15" height="15" viewBox="0 0 15 15"><circle cx="9.5" cy="5" r="4.3" fill="none" stroke="#252423" stroke-width="1.1"/><path d="M6.3 8.2L0.8 14" stroke="#252423" stroke-width="1.1"/></svg>
<div class="t" style="left:1044.4px;top:218.9px;font-size:13px;color:#252423;transform:scaleX(0.989);transform-origin:0 0;">Hae</div>
<div style="position:absolute;left:1011px;top:244px;width:191px;height:1px;background:#e1dfdd"></div>
<div style="position:absolute;left:1011px;top:253px;width:178px;height:495px;overflow:hidden">
<div style="position:absolute;left:38px;top:-4.5px;width:12px;height:12px;border:1px solid #8a8886;border-radius:2px;box-sizing:border-box"></div>
<div class="t" style="left:72.4px;top:-3.5px;font-size:12px;color:#3b3a39">icon</div>
<div style="position:absolute;left:38px;top:19.5px;width:12px;height:12px;border:1px solid #8a8886;border-radius:2px;box-sizing:border-box"></div>
<div class="t" style="left:72.4px;top:20.5px;font-size:12px;color:#3b3a39">label</div>
<div style="position:absolute;left:38px;top:43.5px;width:12px;height:12px;border:1px solid #8a8886;border-radius:2px;box-sizing:border-box"></div>
<div class="t" style="left:72.4px;top:44.5px;font-size:12px;color:#3b3a39">modifiedTime</div>
<div style="position:absolute;left:38px;top:67.5px;width:12px;height:12px;border:1px solid #8a8886;border-radius:2px;box-sizing:border-box"></div>
<div class="t" style="left:72.4px;top:68.5px;font-size:12px;color:#3b3a39">name</div>
<div style="position:absolute;left:38px;top:91.5px;width:12px;height:12px;border:1px solid #8a8886;border-radius:2px;box-sizing:border-box"></div>
<div class="t" style="left:72.4px;top:92.5px;font-size:12px;color:#3b3a39">objCode</div>
<div style="position:absolute;left:38px;top:115.5px;width:12px;height:12px;border:1px solid #8a8886;border-radius:2px;box-sizing:border-box"></div>
<div class="t" style="left:72.4px;top:116.5px;font-size:12px;color:#3b3a39">oldRevision</div>
<div style="position:absolute;left:38px;top:139.5px;width:12px;height:12px;border:1px solid #8a8886;border-radius:2px;box-sizing:border-box"></div>
<div class="t" style="left:72.4px;top:140.5px;font-size:12px;color:#3b3a39">owner</div>
<div style="position:absolute;left:38px;top:163.5px;width:12px;height:12px;border:1px solid #8a8886;border-radius:2px;box-sizing:border-box"></div>
<div class="t" style="left:72.4px;top:164.5px;font-size:12px;color:#3b3a39">ownerId</div>
<div style="position:absolute;left:38px;top:187.5px;width:12px;height:12px;border:1px solid #8a8886;border-radius:2px;box-sizing:border-box"></div>
<div class="t" style="left:72.4px;top:188.5px;font-size:12px;color:#3b3a39">publicity</div>
<div style="position:absolute;left:38px;top:211.5px;width:12px;height:12px;border:1px solid #8a8886;border-radius:2px;box-sizing:border-box"></div>
<div class="t" style="left:72.4px;top:212.5px;font-size:12px;color:#3b3a39">publicityName</div>
<div style="position:absolute;left:38px;top:235.5px;width:12px;height:12px;border:1px solid #8a8886;border-radius:2px;box-sizing:border-box"></div>
<div class="t" style="left:72.4px;top:236.5px;font-size:12px;color:#3b3a39">revision</div>
<div style="position:absolute;left:38px;top:259.5px;width:12px;height:12px;border:1px solid #8a8886;border-radius:2px;box-sizing:border-box"></div>
<div class="t" style="left:72.4px;top:260.5px;font-size:12px;color:#3b3a39">revisionCount</div>
<div style="position:absolute;left:38px;top:283.5px;width:12px;height:12px;border:1px solid #8a8886;border-radius:2px;box-sizing:border-box"></div>
<div class="t" style="left:72.4px;top:284.5px;font-size:12px;color:#3b3a39">stateHistory</div>
<div style="position:absolute;left:38px;top:307.5px;width:12px;height:12px;background:#f2c811;border-radius:2px"></div>
<svg style="position:absolute;left:40px;top:310.5px" width="8" height="6"><path d="M0.5 3L3 5.5L7.5 0.5" fill="none" stroke="#a08000" stroke-width="1"/></svg>
<div class="t" style="left:72.4px;top:308.5px;font-size:12px;color:#3b3a39">status</div>
<div style="position:absolute;left:38px;top:331.5px;width:12px;height:12px;background:#f2c811;border-radius:2px"></div>
<svg style="position:absolute;left:40px;top:334.5px" width="8" height="6"><path d="M0.5 3L3 5.5L7.5 0.5" fill="none" stroke="#a08000" stroke-width="1"/></svg>
<div class="t" style="left:72.4px;top:332.5px;font-size:12px;color:#3b3a39">statusName</div>
<div style="position:absolute;left:38px;top:355.5px;width:12px;height:12px;border:1px solid #8a8886;border-radius:2px;box-sizing:border-box"></div>
<div class="t" style="left:72.4px;top:356.5px;font-size:12px;color:#3b3a39">thumbnail</div>
<div style="position:absolute;left:38px;top:379.5px;width:12px;height:12px;border:1px solid #8a8886;border-radius:2px;box-sizing:border-box"></div>
<div class="t" style="left:72.4px;top:380.5px;font-size:12px;color:#3b3a39">thumbnailMimeTy...</div>
<div style="position:absolute;left:38px;top:403.5px;width:12px;height:12px;border:1px solid #8a8886;border-radius:2px;box-sizing:border-box"></div>
<div class="t" style="left:72.4px;top:404.5px;font-size:12px;color:#3b3a39">thumbnailSource</div>
<div style="position:absolute;left:38px;top:427.5px;width:12px;height:12px;border:1px solid #8a8886;border-radius:2px;box-sizing:border-box"></div>
<div class="t" style="left:72.4px;top:428.5px;font-size:12px;color:#3b3a39">translationId</div>
<div style="position:absolute;left:38px;top:451.5px;width:12px;height:12px;border:1px solid #8a8886;border-radius:2px;box-sizing:border-box"></div>
<div class="t" style="left:72.4px;top:452.5px;font-size:12px;color:#3b3a39">type</div>
<div style="position:absolute;left:38px;top:475.5px;width:12px;height:12px;border:1px solid #8a8886;border-radius:2px;box-sizing:border-box"></div>
<div class="t" style="left:72.4px;top:476.5px;font-size:12px;color:#3b3a39">typeName</div>
</div>
<div style="position:absolute;left:1189px;top:465px;width:8px;height:283px;background:#c8c6c4"></div>
<div style="position:absolute;left:1037px;top:555px;width:93px;height:26px;border:3px solid #ed1c24;box-sizing:border-box"></div>
<div style="position:absolute;left:1037px;top:581px;width:119px;height:23px;border:3px solid #00a2e8;box-sizing:border-box"></div>
<div style="position:absolute;left:82px;top:713px;width:72px;height:35px;background:#ffffff;border-left:1px solid #8a8886;border-right:1px solid #c8c6c4;box-sizing:border-box"></div>
<div style="position:absolute;left:82px;top:744px;width:72px;height:4px;background:#f2c811"></div>
<div class="t" style="left:102.8px;top:726px;font-size:12px;color:#252423;transform:scaleX(0.915);transform-origin:0 0;">Sivu 1</div>
<div style="position:absolute;left:154px;top:715px;width:39px;height:32px;background:#f2c811"></div>
<div style="position:absolute;left:168px;top:730.5px;width:11px;height:2.4px;background:#6b6b6b"></div>
<div style="position:absolute;left:172.3px;top:726.2px;width:2.4px;height:11px;background:#6b6b6b"></div>
<svg style="position:absolute;left:47px;top:727px;" width="6" height="8" viewBox="0 0 6 8"><path d="M5.5 0L0.5 4L5.5 8Z" fill="#c8c6c4"/></svg>
<svg style="position:absolute;left:69px;top:727px;" width="6" height="8" viewBox="0 0 6 8"><path d="M0.5 0L5.5 4L0.5 8Z" fill="#c8c6c4"/></svg>
<div style="position:absolute;left:0px;top:748px;width:1202px;height:1px;background:#d2d0ce"></div>
<div class="t" style="left:6.0px;top:756px;font-size:12px;color:#3b3a39;transform:scaleX(0.957);transform-origin:0 0;">Sivu 1/1</div>
<div style="position:absolute;left:41px;top:772px;width:1161px;height:1px;background:#5f5f5f"></div>
<div style="position:absolute;left:1201px;top:196px;width:1px;height:577px;background:#5f5f5f"></div>
</body></html>
